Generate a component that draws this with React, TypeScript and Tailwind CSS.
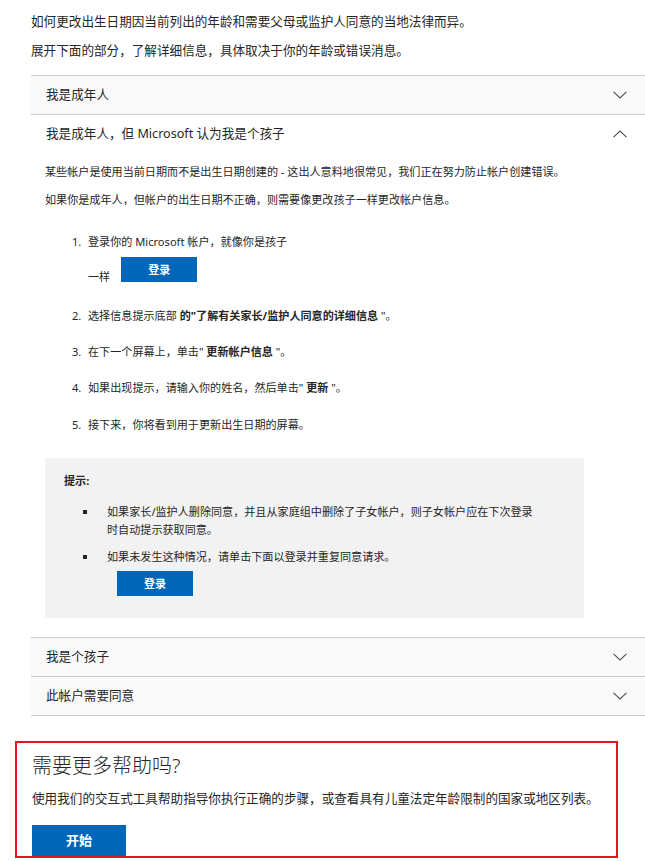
import React from "react";

const FONT = { fontFamily: '"Noto Sans", "Noto Sans CJK SC", sans-serif' };

function ChevronDown() {
  return (
    <svg width="14" height="8" viewBox="0 0 14 8" fill="none">
      <polyline points="0.5,0.8 7,7 13.5,0.8" stroke="#505050" strokeWidth="1.1" />
    </svg>
  );
}
function ChevronUp() {
  return (
    <svg width="14" height="8" viewBox="0 0 14 8" fill="none">
      <polyline points="0.5,7.2 7,1 13.5,7.2" stroke="#505050" strokeWidth="1.1" />
    </svg>
  );
}

function Header({ title, open }: { title: string; open?: boolean }) {
  return (
    <div
      className={`flex h-[39px] items-center justify-between border-t border-[#cccccc] pl-[15px] pr-[18px] text-[12.6px] leading-[20px] text-[#262626] ${
        open ? "bg-white" : "bg-[#f9f9f9]"
      }`}
    >
      <span>{title}</span>
      {open ? <ChevronUp /> : <ChevronDown />}
    </div>
  );
}

function Btn({ label }: { label: string }) {
  return (
    <div className="flex h-[25px] w-[76px] items-center justify-center bg-[#0067b8] text-[11px] font-bold text-white">
      {label}
    </div>
  );
}

function Item({ n, children, className = "" }: { n: string; children: React.ReactNode; className?: string }) {
  return (
    <div className={`flex ${className}`}>
      <div className="w-[16px] shrink-0">{n}</div>
      <div>{children}</div>
    </div>
  );
}

export default function App() {
  return (
    <div className="min-h-[861px] w-[645px] bg-white text-[#262626]" style={FONT}>
      <div className="pl-[31px]">
        <p className="pt-[12px] text-[12.6px] leading-[20px]">
          如何更改出生日期因当前列出的年龄和需要父母或监护人同意的当地法律而异。
        </p>
        <p className="mt-[9px] text-[12.6px] leading-[20px]">
          展开下面的部分，了解详细信息，具体取决于你的年龄或错误消息。
        </p>

        <div className="mt-[14px] border-b border-[#cccccc]">
          <Header title="我是成年人" />
          <Header title="我是成年人，但 Microsoft 认为我是个孩子" open />
          <div className="pb-[19px] pl-[14px] text-[11.1px] leading-[18px]">
            <p className="pt-[10px]">
              某些帐户是使用当前日期而不是出生日期创建的 - 这出人意料地很常见，我们正在努力防止帐户创建错误。
            </p>
            <p className="mt-[10px]">如果你是成年人，但帐户的出生日期不正确，则需要像更改孩子一样更改帐户信息。</p>

            <div className="pl-[27px]">
              <Item n="1." className="mt-[24px]">
                <div>登录你的 Microsoft 帐户，就像你是孩子</div>
                <div className="mt-[6px] flex items-start">
                  <span className="mt-[11px]">一样</span>
                  <div className="ml-[11px]">
                    <Btn label="登录" />
                  </div>
                </div>
              </Item>
              <Item n="2." className="mt-[21px]">
                选择信息提示底部 <b>的"了解有关家长/监护人同意的详细信息</b> "。
              </Item>
              <Item n="3." className="mt-[18px]">
                在下一个屏幕上，单击" <b>更新帐户信息</b> "。
              </Item>
              <Item n="4." className="mt-[18px]">
                如果出现提示，请输入你的姓名，然后单击" <b>更新</b> "。
              </Item>
              <Item n="5." className="mt-[19px]">
                接下来，你将看到用于更新出生日期的屏幕。
              </Item>
            </div>

            <div className="mt-[24px] w-[539px] bg-[#f2f2f2] pb-[22px] pl-[19px] pt-[14px]">
              <div className="font-bold">提示:</div>
              <div className="mt-[13px] flex">
                <div className="flex w-[43px] shrink-0 justify-end pr-[20px] pt-[7px]">
                  <div className="h-[4px] w-[4px] bg-[#262626]" />
                </div>
                <div className="whitespace-nowrap">
                  如果家长/监护人删除同意，并且从家庭组中删除了子女帐户，则子女帐户应在下次登录
                  <br />
                  时自动提示获取同意。
                </div>
              </div>
              <div className="mt-[9px] flex">
                <div className="flex w-[43px] shrink-0 justify-end pr-[20px] pt-[7px]">
                  <div className="h-[4px] w-[4px] bg-[#262626]" />
                </div>
                <div>
                  <div>如果未发生这种情况，请单击下面以登录并重复同意请求。</div>
                  <div className="ml-[10px] mt-[5px]">
                    <Btn label="登录" />
                  </div>
                </div>
              </div>
            </div>
          </div>
          <Header title="我是个孩子" />
          <Header title="此帐户需要同意" />
        </div>
      </div>

      <div className="ml-[15px] mt-[25px] w-[603px] border-2 border-[#e81123] pb-[0px] pl-[15px] pt-[10px]">
        <h2 className="text-[20px] font-light leading-[26px] text-[#262626]">需要更多帮助吗?</h2>
        <p className="mt-[11px] text-[12.6px] leading-[18px]">
          使用我们的交互式工具帮助指导你执行正确的步骤，或查看具有儿童法定年龄限制的国家或地区列表。
        </p>
        <div className="mt-[17px] flex h-[31px] w-[94px] items-center justify-center bg-[#0067b8] text-[13px] font-bold text-white">
          开始
        </div>
      </div>
    </div>
  );
}
